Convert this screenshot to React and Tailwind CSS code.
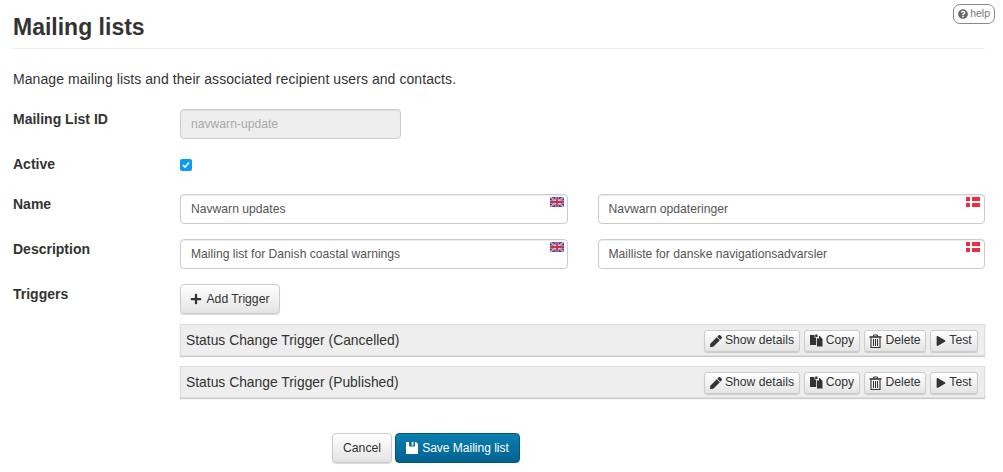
import { FaPlus, FaPen, FaPlay, FaQuestionCircle } from 'react-icons/fa';

function FlagGb() {
  return (
    <svg width="14" height="10" viewBox="0 0 14 10" className="absolute right-[4px] top-[3px]">
      <rect width="14" height="10" rx="1" fill="#23479e" />
      <path d="M0 0L14 10M14 0L0 10" stroke="#e9dbe4" strokeWidth="1.6" />
      <path d="M0 0L14 10M14 0L0 10" stroke="#d8384f" strokeWidth="0.6" />
      <path d="M7 0V10M0 5H14" stroke="#e9dbe4" strokeWidth="3" />
      <path d="M7 0V10M0 5H14" stroke="#d42f49" strokeWidth="1.8" />
    </svg>
  );
}

function FlagDk() {
  return (
    <svg width="14" height="10" viewBox="0 0 14 10" className="absolute right-[5px] top-[3px]">
      <rect width="14" height="10" fill="#ee2b45" />
      <path d="M5 0V10" stroke="#fff" strokeWidth="2" />
      <path d="M0 5H14" stroke="#fff" strokeWidth="2" />
    </svg>
  );
}

function CopyIcon() {
  return (
    <svg width="13" height="13" viewBox="0 0 13 13" fill="#333">
      <path d="M0 1H4.5V3.5L6.2 3.5V11H0Z" />
      <path d="M5.2 0.5H7.5V3H5.2Z" />
      <path d="M7 4.5H9V2H9.7L12.5 5V12.5H7Z" />
    </svg>
  );
}

function TrashIcon() {
  return (
    <svg width="13" height="14" viewBox="0 0 13 14" fill="none" stroke="#333">
      <path d="M0.5 3H12.5" strokeWidth="1.6" />
      <path d="M4.5 2.5V1H8.5V2.5" strokeWidth="1" />
      <path d="M2 4V13.5H11V4" strokeWidth="1.1" />
      <path d="M4.5 5V12M6.5 5V12M8.5 5V12" strokeWidth="1" />
    </svg>
  );
}

function SaveIcon() {
  return (
    <svg width="12" height="12" viewBox="0 0 12 12" fill="#fff">
      <path fillRule="evenodd" d="M0 0H10L12 2V12H0ZM3 0V4.6H9V0H7.4V3.4H5.8V0Z" />
    </svg>
  );
}

function Btn({ icon, children, className = '' }) {
  return (
    <button className={`flex items-center justify-center gap-[3px] h-[22px] rounded-[3px] border border-[#ccc] bg-linear-to-b from-white to-[#e4e4e4] text-[12.2px] text-[#333] shadow-[0_1px_1px_rgba(0,0,0,0.15)] ${className}`}>
      {icon}
      {children}
    </button>
  );
}

function TriggerRow({ title }) {
  return (
    <div className="flex items-center justify-between h-8 pl-[5px] pr-[6px] bg-[#eeeeee] border border-[#dcdcdc] shadow-[0_1px_1px_rgba(0,0,0,0.2)]">
      <span className="text-[13.87px] text-[#333]">{title}</span>
      <div className="flex gap-[4px] mt-[1px]">
        <Btn className="w-[96px]" icon={<FaPen className="text-[12px] text-[#333]" />}>Show details</Btn>
        <Btn className="w-[56px]" icon={<CopyIcon />}>Copy</Btn>
        <Btn className="w-[62px]" icon={<TrashIcon />}>Delete</Btn>
        <Btn className="w-[48px]" icon={<FaPlay className="text-[10px] text-[#333]" />}>Test</Btn>
      </div>
    </div>
  );
}

function LangInput({ value, flag }) {
  return (
    <div className="relative flex-1">
      <div className="flex items-center h-[30px] px-[10px] rounded-[4px] border border-[#ccc] bg-white text-[12.15px] text-[#555] shadow-[inset_0_1px_1px_rgba(0,0,0,0.075)]">
        {value}
      </div>
      {flag === 'gb' ? <FlagGb /> : <FlagDk />}
    </div>
  );
}

export default function App() {
  return (
    <div className="relative h-[472px] overflow-hidden bg-white pl-[13px] pr-[18px] font-['Liberation_Sans',Arial,sans-serif] text-[#333]">
      <div className="absolute right-[8px] top-[4px] flex items-center gap-[2px] h-[20px] px-[4px] rounded-[7px] border border-[#888] text-[10.5px] text-[#777]">
        <FaQuestionCircle className="text-[10px] text-[#666]" />
        help
      </div>

      <h1 className="pt-[13px] pb-[7px] text-[23px] leading-[28px] font-bold border-b border-[#eee]">Mailing lists</h1>

      <p className="mt-[20px] text-[14px] leading-[20px] tracking-[0.07px]">Manage mailing lists and their associated recipient users and contacts.</p>

      <div className="mt-[20px] flex">
        <label className="w-[167px] pt-[1px] text-[14px] leading-[18px] font-bold">Mailing List ID</label>
        <div className="flex items-center w-[221px] h-[30px] px-[10px] rounded-[4px] border border-[#ccc] bg-[#eeeeee] text-[12.15px] text-[#aaa] shadow-[inset_0_1px_1px_rgba(0,0,0,0.075)]">navwarn-update</div>
      </div>

      <div className="mt-[16px] flex items-center h-[20px]">
        <label className="w-[167px] -mt-[2px] text-[14px] leading-[18px] font-bold">Active</label>
        <span className="flex items-center justify-center w-[12px] h-[12px] rounded-[2px] bg-[#0d9bf2]">
          <svg width="8" height="8" viewBox="0 0 8 8" fill="none" stroke="#fff" strokeWidth="1.6"><path d="M1 4.2L3.1 6.2L7 1.6" /></svg>
        </span>
      </div>

      <div className="mt-[19px] flex">
        <label className="w-[167px] pt-[1px] text-[14px] leading-[18px] font-bold">Name</label>
        <div className="flex-1 flex gap-[30px]">
          <LangInput value="Navwarn updates" flag="gb" />
          <LangInput value="Navwarn opdateringer" flag="dk" />
        </div>
      </div>

      <div className="mt-[15px] flex">
        <label className="w-[167px] pt-[1px] text-[14px] leading-[18px] font-bold">Description</label>
        <div className="flex-1 flex gap-[30px]">
          <LangInput value="Mailing list for Danish coastal warnings" flag="gb" />
          <LangInput value="Mailliste for danske navigationsadvarsler" flag="dk" />
        </div>
      </div>

      <div className="mt-[15px] flex">
        <label className="w-[167px] pt-[1px] text-[14px] leading-[18px] font-bold">Triggers</label>
        <div className="flex-1">
          <Btn className="w-[100px] h-[30px]! rounded-[4px]!" icon={<FaPlus className="text-[12px] text-[#333] mr-[1px]" />}>Add Trigger</Btn>
          <div className="mt-[10px] flex flex-col gap-[10px]">
            <TriggerRow title="Status Change Trigger (Cancelled)" />
            <TriggerRow title="Status Change Trigger (Published)" />
          </div>
        </div>
      </div>

      <div className="mt-[35px] ml-[319px] flex gap-[3px]">
        <Btn className="w-[60px] h-[30px]! rounded-[4px]!">Cancel</Btn>
        <button className="flex items-center justify-center gap-[4px] w-[125px] h-[30px] rounded-[4px] border border-[#04567f] bg-linear-to-b from-[#0a7fb0] to-[#03628f] text-[12px] text-white">
          <SaveIcon />
          Save Mailing list
        </button>
      </div>
    </div>
  );
}
